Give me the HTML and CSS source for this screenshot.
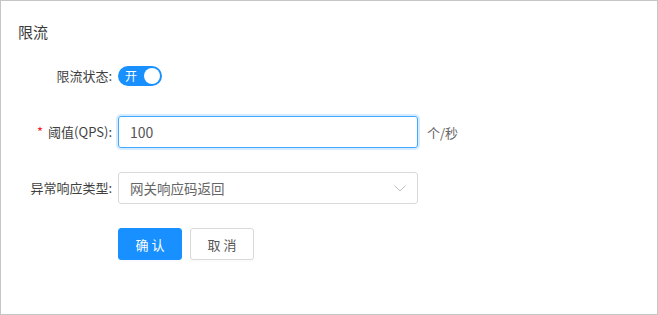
FILE: index.html
```html
<!DOCTYPE html>
<html lang="zh-CN">
<head>
<meta charset="utf-8">
<link rel="stylesheet" href="styles.css">
</head>
<body>
<div class="panel">
  <div class="title">限流</div>
  <div class="form">
    <div class="label">限流状态:</div>
    <div class="control">
      <span class="switch"><span class="switch-text">开</span><span class="knob"></span></span>
    </div>
    <div class="extra"></div>

    <div class="label"><span class="req">*</span>阈值(QPS):</div>
    <div class="control"><div class="input focused">100</div></div>
    <div class="extra unit">个/秒</div>

    <div class="label">异常响应类型:</div>
    <div class="control">
      <div class="input select"><span class="select-value">网关响应码返回</span>
        <svg class="arrow" width="12" height="7" viewBox="0 0 12 7"><path d="M0.5 0.5 L6 6 L11.5 0.5" fill="none" stroke="#bfbfbf" stroke-width="1"/></svg>
      </div>
    </div>
    <div class="extra"></div>

    <div class="label"></div>
    <div class="control actions">
      <button class="btn primary">确 认</button>
      <button class="btn">取 消</button>
    </div>
    <div class="extra"></div>
  </div>
</div>
</body>
</html>
```
FILE: styles.css
```css
html, body {
  margin: 0;
  padding: 0;
  background: #fff;
}
body {
  font-family: "Noto Sans CJK SC", "Noto Sans", sans-serif;
  color: #333;
}
.panel {
  box-sizing: border-box;
  width: 658px;
  height: 315px;
  border: 1px solid #c6c6c6;
  padding: 21px 0 0 17px;
}
.title {
  font-size: 15px;
  line-height: 20px;
  color: #3a3a3a;
}
.form {
  margin-top: 18px;
  display: grid;
  grid-template-columns: 94px 300px auto;
  column-gap: 6px;
  row-gap: 24px;
  align-items: center;
}
.label {
  font-size: 13px;
  line-height: 32px;
  height: 32px;
  text-align: right;
  color: #3f3f3f;
  white-space: nowrap;
}
.req {
  color: #f5222d;
  margin-right: 5px;
  font-size: 13px;
}
.control {
  height: 32px;
  display: flex;
  align-items: center;
}
.switch {
  position: relative;
  display: inline-block;
  width: 44px;
  height: 20px;
  border-radius: 10px;
  background: #1890ff;
}
.switch-text {
  position: absolute;
  left: 7px;
  top: 0;
  line-height: 20px;
  font-size: 12px;
  color: #fff;
}
.knob {
  position: absolute;
  right: 2px;
  top: 2px;
  width: 16px;
  height: 16px;
  border-radius: 50%;
  background: #fff;
}
.input {
  box-sizing: border-box;
  width: 300px;
  height: 32px;
  border: 1px solid #d9d9d9;
  border-radius: 3px;
  padding: 0 11px;
  font-size: 13px;
  line-height: 30px;
  color: #555;
}
.input.focused {
  border-color: #40a9ff;
  box-shadow: 0 0 0 2px rgba(24, 144, 255, 0.18);
  font-size: 14px;
}
.select {
  display: flex;
  align-items: center;
  justify-content: space-between;
  color: #666;
  font-size: 13.5px;
}
.unit {
  font-size: 13px;
  color: #666;
  padding-left: 3px;
}
.actions {
  gap: 8px;
}
.btn {
  box-sizing: border-box;
  height: 32px;
  width: 64px;
  border-radius: 3px;
  border: 1px solid #d9d9d9;
  background: #fff;
  color: #555;
  font-family: "Noto Sans CJK SC", sans-serif;
  font-size: 13px;
  padding: 0;
  box-shadow: 0 2px 0 rgba(0, 0, 0, 0.015);
}
.btn.primary {
  background: #1890ff;
  border-color: #1890ff;
  color: #fff;
}
```
